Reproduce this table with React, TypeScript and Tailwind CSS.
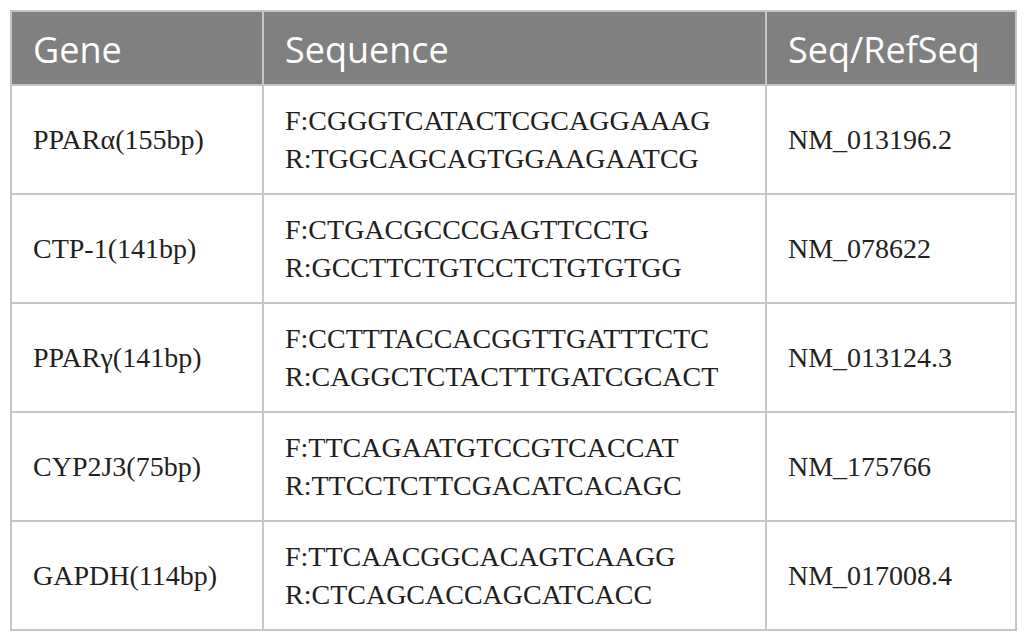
type Row = { gene: string; f: string; r: string; ref: string }

const ROWS: Row[] = [
  { gene: 'PPARα(155bp)', f: 'F:CGGGTCATACTCGCAGGAAAG', r: 'R:TGGCAGCAGTGGAAGAATCG', ref: 'NM_013196.2' },
  { gene: 'CTP-1(141bp)', f: 'F:CTGACGCCCGAGTTCCTG', r: 'R:GCCTTCTGTCCTCTGTGTGG', ref: 'NM_078622' },
  { gene: 'PPARγ(141bp)', f: 'F:CCTTTACCACGGTTGATTTCTC', r: 'R:CAGGCTCTACTTTGATCGCACT', ref: 'NM_013124.3' },
  { gene: 'CYP2J3(75bp)', f: 'F:TTCAGAATGTCCGTCACCAT', r: 'R:TTCCTCTTCGACATCACAGC', ref: 'NM_175766' },
  { gene: 'GAPDH(114bp)', f: 'F:TTCAACGGCACAGTCAAGG', r: 'R:CTCAGCACCAGCATCACC', ref: 'NM_017008.4' },
]

const HEAD = 'border-2 border-[#c6c6c6] bg-[#808080] pl-[21px] pt-[4px] text-left align-middle font-normal text-white'
const CELL = 'border-2 border-[#c6c6c6] pl-[21px] align-middle'

export default function App() {
  return (
    <div className="min-h-[639px] w-[1025px] bg-white pl-[10px] pt-[10px]">
      <table
        className="w-[1005px] table-fixed border-collapse text-[#231f20]"
        style={{ fontFamily: '"Liberation Serif", "DejaVu Serif", serif' }}
      >
        <colgroup>
          <col className="w-[252px]" />
          <col className="w-[503px]" />
          <col className="w-[250px]" />
        </colgroup>
        <thead>
          <tr
            className="h-[74px] text-[36px] leading-none"
            style={{ fontFamily: '"Open Sans", "Noto Sans", sans-serif' }}
          >
            <th className={HEAD}>Gene</th>
            <th className={HEAD}>Sequence</th>
            <th className={HEAD}>Seq/RefSeq</th>
          </tr>
        </thead>
        <tbody>
          {ROWS.map((row) => (
            <tr key={row.gene} className="h-[109px] text-[28px] leading-[38px]">
              <td className={CELL}>{row.gene}</td>
              <td className={CELL}>
                <div>{row.f}</div>
                <div>{row.r}</div>
              </td>
              <td className={CELL}>{row.ref}</td>
            </tr>
          ))}
        </tbody>
      </table>
    </div>
  )
}
